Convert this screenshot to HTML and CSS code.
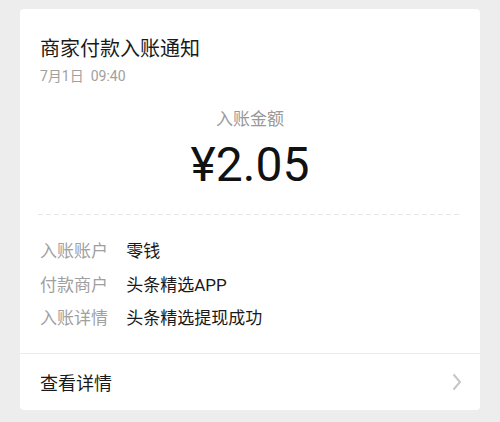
FILE: index.html
```html
<!DOCTYPE html>
<html lang="zh-CN">
<head>
    <meta charset="UTF-8">
    <meta name="viewport" content="width=device-width, initial-scale=1.0">
    <title>商家付款入账通知</title>
    <link rel="stylesheet" href="styles.css">
</head>
<body>
    <div class="notice-card">
        <div class="notice-head">
            <div class="notice-title">商家付款入账通知</div>
            <div class="notice-time">7月1日&nbsp;&nbsp;09:40</div>
        </div>

        <div class="amount-box">
            <div class="amount-label">入账金额</div>
            <div class="amount-value">¥2.05</div>
        </div>

        <div class="dash-line"></div>

        <div class="detail-list">
            <div class="detail-row">
                <span class="detail-key">入账账户</span>
                <span class="detail-val">零钱</span>
            </div>
            <div class="detail-row">
                <span class="detail-key">付款商户</span>
                <span class="detail-val">头条精选APP</span>
            </div>
            <div class="detail-row">
                <span class="detail-key">入账详情</span>
                <span class="detail-val">头条精选提现成功</span>
            </div>
        </div>

        <div class="notice-foot">
            <span>查看详情</span>
            <svg class="arrow" width="10" height="18" viewBox="0 0 10 18">
                <path d="M1.5 1.5 L8 9 L1.5 16.5" fill="none" stroke="#c6c6c6" stroke-width="2"/>
            </svg>
        </div>
    </div>
</body>
</html>
```

FILE: styles.css
```css
body {
    margin: 0;
    padding: 9px 20px;
    background: #ededed;
    font-family: Roboto, "Noto Sans CJK SC", sans-serif;
    color: #1a1a1a;
}
.notice-card {
    background: white;
    border-radius: 4px;
}
.notice-head {
    padding: 26px 20px 0;
}
.notice-title {
    font-size: 20px;
    line-height: 28px;
    color: #1a1a1a;
}
.notice-time {
    margin-top: 3px;
    font-size: 14px;
    line-height: 20px;
    color: #a0a0a0;
}
.amount-box {
    text-align: center;
    padding-top: 21px;
}
.amount-label {
    font-size: 17px;
    line-height: 24px;
    color: #999;
}
.amount-value {
    margin-top: 10px;
    font-size: 48px;
    line-height: 48px;
    color: #111;
}
.dash-line {
    margin: 25px 20px 0 18px;
    height: 1px;
    background: repeating-linear-gradient(to right, #e6e6e6 0 5px, transparent 5px 8px);
}
.detail-list {
    padding: 20px 20px 17px;
}
.detail-row {
    font-size: 17px;
    line-height: 33.5px;
}
.detail-key {
    color: #a0a0a0;
    margin-right: 14px;
}
.detail-val {
    color: #1a1a1a;
}
.notice-foot {
    display: flex;
    align-items: center;
    justify-content: space-between;
    height: 56px;
    padding: 0 18px 0 20px;
    border-top: 1px solid #ececec;
    font-size: 18px;
    color: #1a1a1a;
}
```
